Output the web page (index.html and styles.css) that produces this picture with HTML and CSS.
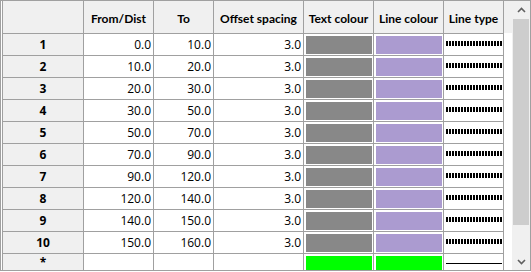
FILE: index.html
```html
<!DOCTYPE html>
<html>
<head>
<title>Spacing table</title>
<link rel="stylesheet" href="styles.css">
</head>
<body>

<div class="gridView">
  <div class="tableArea">
    <div class="sheet">
      <div class="head corner"></div>
      <div class="head">From/Dist</div>
      <div class="head">To</div>
      <div class="head">Offset spacing</div>
      <div class="head">Text colour</div>
      <div class="head">Line colour</div>
      <div class="head">Line type</div>

      <div class="rowHead">1</div><div class="num">0.0</div><div class="num">10.0</div><div class="num">3.0</div>
      <div class="swatchCell"><div class="swatch grey"></div></div><div class="swatchCell"><div class="swatch purple"></div></div>
      <div class="lineCell"><div class="dashes"></div></div>

      <div class="rowHead">2</div><div class="num">10.0</div><div class="num">20.0</div><div class="num">3.0</div>
      <div class="swatchCell"><div class="swatch grey"></div></div><div class="swatchCell"><div class="swatch purple"></div></div>
      <div class="lineCell"><div class="dashes"></div></div>

      <div class="rowHead">3</div><div class="num">20.0</div><div class="num">30.0</div><div class="num">3.0</div>
      <div class="swatchCell"><div class="swatch grey"></div></div><div class="swatchCell"><div class="swatch purple"></div></div>
      <div class="lineCell"><div class="dashes"></div></div>

      <div class="rowHead">4</div><div class="num">30.0</div><div class="num">50.0</div><div class="num">3.0</div>
      <div class="swatchCell"><div class="swatch grey"></div></div><div class="swatchCell"><div class="swatch purple"></div></div>
      <div class="lineCell"><div class="dashes"></div></div>

      <div class="rowHead">5</div><div class="num">50.0</div><div class="num">70.0</div><div class="num">3.0</div>
      <div class="swatchCell"><div class="swatch grey"></div></div><div class="swatchCell"><div class="swatch purple"></div></div>
      <div class="lineCell"><div class="dashes"></div></div>

      <div class="rowHead">6</div><div class="num">70.0</div><div class="num">90.0</div><div class="num">3.0</div>
      <div class="swatchCell"><div class="swatch grey"></div></div><div class="swatchCell"><div class="swatch purple"></div></div>
      <div class="lineCell"><div class="dashes"></div></div>

      <div class="rowHead">7</div><div class="num">90.0</div><div class="num">120.0</div><div class="num">3.0</div>
      <div class="swatchCell"><div class="swatch grey"></div></div><div class="swatchCell"><div class="swatch purple"></div></div>
      <div class="lineCell"><div class="dashes"></div></div>

      <div class="rowHead">8</div><div class="num">120.0</div><div class="num">140.0</div><div class="num">3.0</div>
      <div class="swatchCell"><div class="swatch grey"></div></div><div class="swatchCell"><div class="swatch purple"></div></div>
      <div class="lineCell"><div class="dashes"></div></div>

      <div class="rowHead">9</div><div class="num">140.0</div><div class="num">150.0</div><div class="num">3.0</div>
      <div class="swatchCell"><div class="swatch grey"></div></div><div class="swatchCell"><div class="swatch purple"></div></div>
      <div class="lineCell"><div class="dashes"></div></div>

      <div class="rowHead">10</div><div class="num">150.0</div><div class="num">160.0</div><div class="num">3.0</div>
      <div class="swatchCell"><div class="swatch grey"></div></div><div class="swatchCell"><div class="swatch purple"></div></div>
      <div class="lineCell"><div class="dashes"></div></div>

      <div class="rowHead star">*</div><div class="num"></div><div class="num"></div><div class="num"></div>
      <div class="swatchCell"><div class="swatch green"></div></div><div class="swatchCell"><div class="swatch green"></div></div>
      <div class="lineCell"><div class="solid"></div></div>
    </div>
    <div class="filler"><div class="fillerHead"></div></div>
  </div>

  <div class="vScroll">
    <div class="arrow">
      <svg width="9" height="6" viewBox="0 0 9 6"><polyline points="1,5 4.5,1.5 8,5" fill="none" stroke="#606060" stroke-width="1.6"/></svg>
    </div>
    <div class="track"><div class="thumb"></div></div>
    <div class="arrow">
      <svg width="9" height="6" viewBox="0 0 9 6"><polyline points="1,1 4.5,4.5 8,1" fill="none" stroke="#606060" stroke-width="1.6"/></svg>
    </div>
  </div>
</div>

</body>
</html>
```

FILE: styles.css
```css
body {
  margin: 0;
  background-color: white;
  font-family: "Open Sans", "Noto Sans", sans-serif;
  font-size: 12px;
  color: black;
}

.gridView {
  width: 531px;
  height: 271px;
  box-sizing: border-box;
  border: 1px solid #a0a0a0;
  display: flex;
  overflow: hidden;
  background-color: white;
}

.tableArea {
  flex: 1;
  display: flex;
  padding-left: 1px;
  overflow: hidden;
}

.sheet {
  display: grid;
  grid-template-columns: 80px 69px 59px 89px 69px 69px 59px;
  grid-template-rows: 32px;
  grid-auto-rows: 21px;
  gap: 1px;
  background-color: #a0a0a0;
  border-left: 1px solid #a0a0a0;
  border-right: 1px solid #a0a0a0;
  align-self: flex-start;
}

.head {
  background-color: #f0f0f0;
  font-family: Lato, "Open Sans", sans-serif;
  font-weight: bold;
  font-size: 12px;
  display: flex;
  align-items: center;
  justify-content: center;
  white-space: nowrap;
  padding-top: 3px;
}

.rowHead {
  background-color: #f0f0f0;
  font-weight: bold;
  text-align: center;
  line-height: 21px;
}

.star {
  line-height: 17px;
}

.num {
  background-color: white;
  text-align: right;
  padding-right: 2px;
  line-height: 21px;
}

.swatchCell {
  background-color: white;
  padding: 2px 1px 1px 2px;
}

.swatch {
  height: 100%;
}

.grey { background-color: #888888; }
.purple { background-color: #ab9bd0; }
.green { background-color: #00ff00; }

.lineCell {
  background-color: white;
  padding: 0 1px 0 2px;
}

.dashes {
  margin-top: 7px;
  height: 5px;
  background: repeating-linear-gradient(to right, #000 0 2px, transparent 2px 3px);
}

.solid {
  margin-top: 9px;
  height: 1px;
  background-color: #000;
}

.filler {
  flex: 1;
  background-color: white;
}

.fillerHead {
  height: 32px;
  background-color: #f0f0f0;
}

.vScroll {
  width: 18px;
  background-color: #f0f0f0;
  display: flex;
  flex-direction: column;
}

.arrow {
  height: 17px;
  display: flex;
  align-items: center;
  justify-content: center;
}

.track {
  flex: 1;
  padding: 1px 1px 0 1px;
}

.thumb {
  height: 206px;
  background-color: #cdcdcd;
}
```
